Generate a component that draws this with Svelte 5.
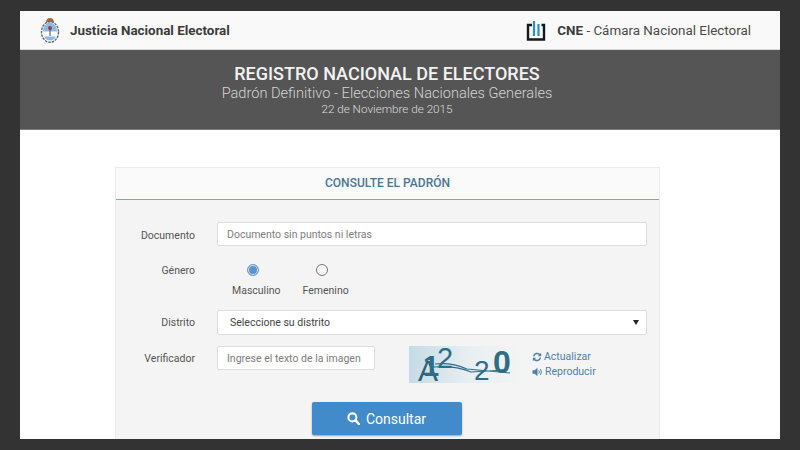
<script>
  const radios = [
    { label: 'Masculino', checked: true },
    { label: 'Femenino', checked: false }
  ];
</script>

<div class="frame">
  <div class="page">
    <header class="topbar">
      <div class="brand">
        <svg class="shield" width="20" height="26" viewBox="0 0 20 26">
          <path d="M6 6 Q6 1 10 1 Q14 1 14 6 Z" fill="#a8683f" />
          <ellipse cx="10" cy="15" rx="8.500" ry="10.300" fill="#fff" stroke="#5d6a62" stroke-width="1.400" stroke-dasharray="2.500 1" />
          <path d="M2.800 14.500 A7.200 9 0 0 1 17.200 14.500 Z" fill="#8fb9e0" />
          <path d="M4 19.500 A7.200 9 0 0 0 16 19.500 Z" fill="#8fb9e0" />
          <circle cx="10" cy="11" r="2" fill="#9c3a5a" />
          <path d="M10 11 V19" stroke="#4d5560" stroke-width="1" />
        </svg>
        <strong>Justicia Nacional Electoral</strong>
      </div>
      <div class="brand cne">
        <svg width="20" height="21" viewBox="0 0 20 21">
          <path d="M6 5 H2 V19.500 H18 V5 H15.500" fill="none" stroke="#15191c" stroke-width="2.400" />
          <path d="M8 16 V1 M12.500 16 V4" fill="none" stroke="#2a8fc4" stroke-width="2.200" />
        </svg>
        <span><strong>CNE</strong> - Cámara Nacional Electoral</span>
      </div>
    </header>

    <section class="banner">
      <h1>REGISTRO NACIONAL DE ELECTORES</h1>
      <h2>Padrón Definitivo - Elecciones Nacionales Generales</h2>
      <p>22 de Noviembre de 2015</p>
    </section>

    <main class="content">
      <div class="card">
        <div class="card-head">CONSULTE EL PADRÓN</div>
        <form class="card-body" on:submit|preventDefault>
          <div class="row documento">
            <label for="doc">Documento</label>
            <input id="doc" class="field" placeholder="Documento sin puntos ni letras" />
          </div>

          <div class="row genero">
            <span class="lbl">Género</span>
            <div class="radios">
              {#each radios as r}
                <label class="radio">
                  <span class="dot" class:on={r.checked}></span>
                  <span>{r.label}</span>
                </label>
              {/each}
            </div>
          </div>

          <div class="row distrito">
            <label for="dis">Distrito</label>
            <div id="dis" class="select">
              <span>Seleccione su distrito</span>
              <span class="caret"></span>
            </div>
          </div>

          <div class="row verif">
            <label for="ver">Verificador</label>
            <input id="ver" class="field small" placeholder="Ingrese el texto de la imagen" />
            <svg class="captcha" width="111" height="37" viewBox="0 0 111 37">
              <defs>
                <linearGradient id="cap" x1="0" x2="1" y1="0" y2="0">
                  <stop offset="0" stop-color="#c5dbe6" />
                  <stop offset="0.55" stop-color="#e8eff2" />
                  <stop offset="1" stop-color="#f3f4f4" />
                </linearGradient>
              </defs>
              <rect width="111" height="37" fill="url(#cap)" />
              <g fill="#2f6d87" font-family="Liberation Sans, sans-serif">
                <text x="9" y="35" font-size="30" fill="#2c5f78">A</text>
                <text x="14" y="30" font-size="29" font-weight="700">1</text>
                <text x="28" y="22" font-size="29">2</text>
                <text x="65" y="34" font-size="28">2</text>
                <text x="84" y="27" font-size="32" font-weight="700">0</text>
              </g>
              <path d="M26 18 Q42 16 58 23 L101 27 M24 21 Q45 19 62 26 L96 24" fill="none" stroke="#2f6d87" stroke-width="1.200" />
            </svg>
            <div class="cap-links">
              <a href="#a">
                <svg width="10" height="10" viewBox="0 0 12 12">
                  <path d="M2 5.200 A4.200 4.200 0 0 1 9.400 3.300 M10 6.800 A4.200 4.200 0 0 1 2.600 8.700" fill="none" stroke="#4f7fa8" stroke-width="1.800" />
                  <path d="M11 1 V5 H7 Z M1 11 V7 H5 Z" fill="#4f7fa8" />
                </svg>
                Actualizar
              </a>
              <a href="#r">
                <svg width="11" height="10" viewBox="0 0 13 12">
                  <path d="M0.500 4 H3 L6.500 1 V11 L3 8 H0.500 Z" fill="#4f7fa8" />
                  <path d="M8 4 Q9.500 6 8 8 M10 2.500 Q12.500 6 10 9.500" fill="none" stroke="#4f7fa8" stroke-width="1.200" />
                </svg>
                Reproducir
              </a>
            </div>
          </div>

          <div class="actions">
            <button type="submit" class="btn">
              <svg width="13" height="13" viewBox="0 0 14 14">
                <circle cx="5.800" cy="5.800" r="4.300" fill="none" stroke="#fff" stroke-width="2.200" />
                <path d="M9 9 L13 13" stroke="#fff" stroke-width="2.600" stroke-linecap="round" />
              </svg>
              Consultar
            </button>
          </div>
        </form>
      </div>
    </main>
  </div>
</div>

<style>
  :global(body) {
    margin: 0;
    background: #333333;
  }

  .frame {
    width: 800px;
    height: 450px;
    box-sizing: border-box;
    padding: 11px 20px;
    background: #333333;
    font-family: Roboto, "Liberation Sans", sans-serif;
    color: #555;
    overflow: hidden;
  }

  .page {
    height: 428px;
    background: #fff;
    overflow: hidden;
  }

  .topbar {
    height: 38px;
    display: flex;
    align-items: center;
    justify-content: space-between;
    padding: 0 29px 0 20px;
    background: #f9f9f9;
    border-bottom: 1px solid #d8d8d8;
  }

  .brand {
    display: flex;
    align-items: center;
    gap: 10px;
    font-size: 13.4px;
    color: #444;
  }

  .brand strong {
    font-weight: 700;
    color: #3b3b3b;
  }

  .cne {
    gap: 11px;
    color: #4a4a4a;
  }

  .banner {
    height: 80px;
    box-sizing: border-box;
    padding: 14px 26px 0 0;
    background: #555555;
    text-align: center;
    color: #f0f0f0;
    border-bottom: 1px solid #7a7a7a;
  }

  h1 {
    margin: 0;
    font-size: 18px;
    line-height: 20px;
    font-weight: 500;
    color: #f2f2f2;
  }

  h2 {
    margin: 0;
    font-size: 14.6px;
    line-height: 18px;
    font-weight: 300;
    color: #d4d4d4;
  }

  .banner p {
    margin: 0;
    font-size: 11.7px;
    line-height: 15px;
    font-weight: 300;
    color: #dddddd;
  }

  .content {
    padding: 37px 0 0 95px;
    display: flex;
  }

  .card {
    width: 545px;
    height: 300px;
    box-sizing: border-box;
    background: #f4f4f4;
    border: 1px solid #ececec;
    border-bottom: 0;
  }

  .card-head {
    height: 31px;
    line-height: 31px;
    text-align: center;
    background: #fafafa;
    border-bottom: 1px solid #7aa3c8;
    font-size: 12px;
    font-weight: 500;
    color: #4a7696;
  }

  .card-body {
    padding: 22px 12px 0 0;
    font-size: 10.5px;
  }

  .row {
    display: flex;
    align-items: center;
  }

  .row > label,
  .lbl {
    width: 79px;
    margin-right: 22px;
    text-align: right;
    color: #555;
  }

  .documento > label {
    margin-top: 2px;
  }

  .field {
    flex: 1;
    height: 24px;
    box-sizing: border-box;
    padding: 0 9px;
    border: 1px solid #dcdcdc;
    background: #fff;
    border-radius: 2px;
    font: inherit;
    color: #555;
    min-width: 0;
  }

  .field::placeholder {
    color: #7d7d7d;
    opacity: 1;
  }

  .genero {
    align-items: flex-start;
    margin-top: 18px;
  }

  .radios {
    display: flex;
    gap: 22px;
    padding-left: 15px;
  }

  .radio {
    display: flex;
    flex-direction: column;
    align-items: center;
    gap: 8px;
    color: #555;
  }

  .dot {
    width: 10px;
    height: 10px;
    margin-right: 7px;
    border: 1px solid #777;
    border-radius: 50%;
    background: #f8f8f8;
  }

  .dot.on {
    border-color: #6f9cc9;
    background: #5b93cc;
    box-shadow: inset 0 0 0 1px #dbe7f2;
  }

  .distrito {
    margin-top: 13px;
  }

  .select {
    flex: 1;
    height: 25px;
    box-sizing: border-box;
    padding: 0 7px 0 12px;
    display: flex;
    align-items: center;
    justify-content: space-between;
    background: #fff;
    border: 1px solid #dcdcdc;
    border-radius: 2px;
    color: #444;
  }

  .caret {
    border-left: 3px solid transparent;
    border-right: 3px solid transparent;
    border-top: 5px solid #222;
  }

  .verif {
    align-items: flex-start;
    margin-top: 11px;
  }

  .verif > label {
    line-height: 25px;
  }

  .field.small {
    flex: none;
    width: 158px;
  }

  .captcha {
    margin-left: 34px;
    display: block;
    overflow: visible;
  }

  .cap-links {
    display: flex;
    flex-direction: column;
    gap: 2px;
    margin: 4px 0 0 12px;
  }

  .cap-links a {
    display: flex;
    align-items: center;
    gap: 2px;
    line-height: 13px;
    color: #4f7fa8;
    text-decoration: none;
  }

  .actions {
    display: flex;
    justify-content: center;
    margin-top: 19px;
    padding-left: 10px;
  }

  .btn {
    width: 150px;
    height: 33px;
    display: flex;
    align-items: center;
    justify-content: center;
    gap: 6px;
    border: 0;
    border-radius: 2px;
    background: #428bca;
    box-shadow: 0 1px 2px rgba(0, 0, 0, 0.35);
    color: #fff;
    font: 400 14px Roboto, "Liberation Sans", sans-serif;
  }
</style>
